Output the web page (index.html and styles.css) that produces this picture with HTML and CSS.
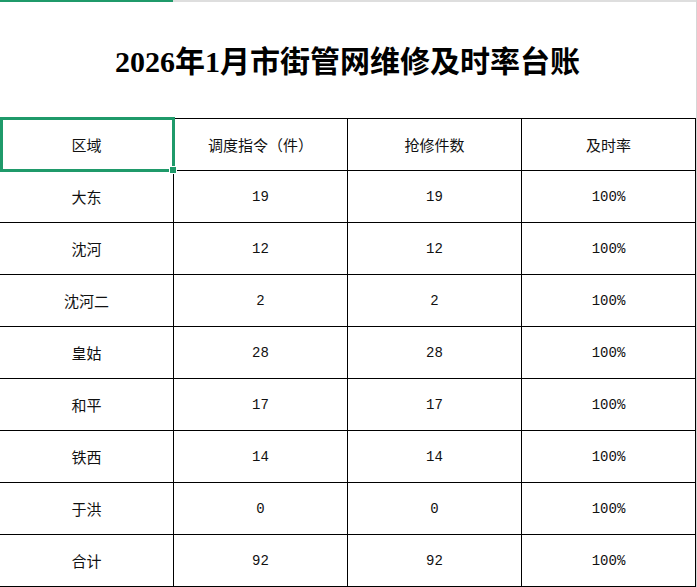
FILE: index.html
```html
<!DOCTYPE html>
<html lang="zh-CN">
<head>
<meta charset="utf-8">
<title>2026年1月市街管网维修及时率台账</title>
<link rel="stylesheet" href="styles.css">
</head>
<body>
<div class="sheet">
  <div class="topbar"><span class="topbar-active"></span><span class="topbar-rest"></span></div>
  <div class="title">2026年1月市街管网维修及时率台账</div>
  <div class="grid">
    <div class="cell head">区域</div>
    <div class="cell head">调度指令（件）</div>
    <div class="cell head">抢修件数</div>
    <div class="cell head">及时率</div>

    <div class="cell">大东</div><div class="cell num">19</div><div class="cell num">19</div><div class="cell num">100%</div>
    <div class="cell">沈河</div><div class="cell num">12</div><div class="cell num">12</div><div class="cell num">100%</div>
    <div class="cell">沈河二</div><div class="cell num">2</div><div class="cell num">2</div><div class="cell num">100%</div>
    <div class="cell">皇姑</div><div class="cell num">28</div><div class="cell num">28</div><div class="cell num">100%</div>
    <div class="cell">和平</div><div class="cell num">17</div><div class="cell num">17</div><div class="cell num">100%</div>
    <div class="cell">铁西</div><div class="cell num">14</div><div class="cell num">14</div><div class="cell num">100%</div>
    <div class="cell">于洪</div><div class="cell num">0</div><div class="cell num">0</div><div class="cell num">100%</div>
    <div class="cell">合计</div><div class="cell num">92</div><div class="cell num">92</div><div class="cell num">100%</div>

    <div class="selection"><span class="handle"></span></div>
  </div>
</div>
</body>
</html>
```

FILE: styles.css
```css
html, body {
  margin: 0;
  padding: 0;
  background: #ffffff;
}

.sheet {
  width: 696px;
  height: 587px;
  border-right: 1px solid #d6d6d6;
  box-sizing: content-box;
  overflow: hidden;
}

.topbar {
  display: flex;
  height: 2px;
}

.topbar-active {
  width: 173px;
  background: #1f9a6a;
}

.topbar-rest {
  flex: 1;
  background: #dedede;
}

.title {
  height: 116px;
  width: 695px;
  display: flex;
  align-items: center;
  justify-content: center;
  font-family: "Liberation Serif", "Noto Sans CJK SC", serif;
  font-weight: 700;
  font-size: 30px;
  color: #000;
  padding-bottom: 2px;
  box-sizing: border-box;
}

.grid {
  position: relative;
  display: grid;
  grid-template-columns: repeat(4, 174px);
  grid-auto-rows: 52px;
  border-top: 1px solid #000;
}

.cell {
  box-sizing: border-box;
  border-right: 1px solid #000;
  border-bottom: 1px solid #000;
  display: flex;
  align-items: center;
  justify-content: center;
  font-family: "Noto Sans CJK SC", sans-serif;
  font-size: 15px;
  color: #111;
}

.num {
  font-family: "Liberation Mono", "DejaVu Sans Mono", monospace;
  font-size: 14px;
}

.selection {
  position: absolute;
  left: 0;
  top: -2px;
  width: 175px;
  height: 55px;
  box-sizing: border-box;
  border: 3px solid #1f9a6a;
  pointer-events: none;
}

.handle {
  position: absolute;
  right: -5px;
  bottom: -5px;
  width: 6px;
  height: 6px;
  background: #1f9a6a;
  border: 1px solid #fff;
}
```
